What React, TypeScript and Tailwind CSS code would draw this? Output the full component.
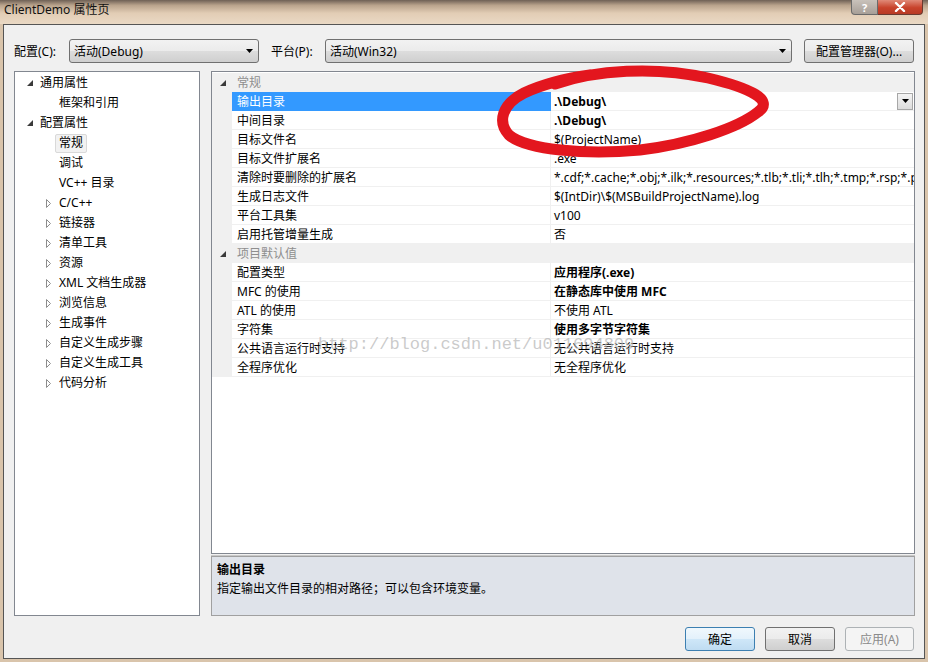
import React from 'react';

type TreeItem = { label: string; level: number; exp?: 'open' | 'closed'; selected?: boolean };

const tree: TreeItem[] = [
  { label: '通用属性', level: 0, exp: 'open' },
  { label: '框架和引用', level: 1 },
  { label: '配置属性', level: 0, exp: 'open' },
  { label: '常规', level: 1, selected: true },
  { label: '调试', level: 1 },
  { label: 'VC++ 目录', level: 1 },
  { label: 'C/C++', level: 1, exp: 'closed' },
  { label: '链接器', level: 1, exp: 'closed' },
  { label: '清单工具', level: 1, exp: 'closed' },
  { label: '资源', level: 1, exp: 'closed' },
  { label: 'XML 文档生成器', level: 1, exp: 'closed' },
  { label: '浏览信息', level: 1, exp: 'closed' },
  { label: '生成事件', level: 1, exp: 'closed' },
  { label: '自定义生成步骤', level: 1, exp: 'closed' },
  { label: '自定义生成工具', level: 1, exp: 'closed' },
  { label: '代码分析', level: 1, exp: 'closed' },
];

type Row = { cat?: string; name?: string; value?: string; bold?: boolean; selected?: boolean };

const rows: Row[] = [
  { cat: '常规' },
  { name: '输出目录', value: '.\\Debug\\', bold: true, selected: true },
  { name: '中间目录', value: '.\\Debug\\', bold: true },
  { name: '目标文件名', value: '$(ProjectName)' },
  { name: '目标文件扩展名', value: '.exe' },
  { name: '清除时要删除的扩展名', value: '*.cdf;*.cache;*.obj;*.ilk;*.resources;*.tlb;*.tli;*.tlh;*.tmp;*.rsp;*.pgc;*.pgd;*.meta;$(TargetPath)' },
  { name: '生成日志文件', value: '$(IntDir)\\$(MSBuildProjectName).log' },
  { name: '平台工具集', value: 'v100' },
  { name: '启用托管增量生成', value: '否' },
  { cat: '项目默认值' },
  { name: '配置类型', value: '应用程序(.exe)', bold: true },
  { name: 'MFC 的使用', value: '在静态库中使用 MFC', bold: true },
  { name: 'ATL 的使用', value: '不使用 ATL' },
  { name: '字符集', value: '使用多字节字符集', bold: true },
  { name: '公共语言运行时支持', value: '无公共语言运行时支持' },
  { name: '全程序优化', value: '无全程序优化' },
];

function OpenArrow() {
  return (
    <svg width="6" height="6" viewBox="0 0 6 6">
      <polygon points="6,0 6,6 0,6" fill="#3a3a3a" />
    </svg>
  );
}

function ClosedArrow() {
  return (
    <svg width="6" height="9" viewBox="0 0 6 9">
      <polygon points="0.5,0.5 4.5,4.5 0.5,8.5" fill="none" stroke="#8c8c8c" strokeWidth="1" />
    </svg>
  );
}

function DownTri() {
  return (
    <svg width="7" height="4" viewBox="0 0 7 4">
      <polygon points="0,0 7,0 3.5,4" fill="#000" />
    </svg>
  );
}

export default function App() {
  return (
    <div className="w-[928px] h-[662px] overflow-hidden relative flex flex-col bg-[#d9c4ab] text-[12px] text-black [font-family:'Noto_Sans','Noto_Sans_CJK_SC',sans-serif]">
      {/* Title bar */}
      <div className="h-[24px] flex items-start justify-between bg-[linear-gradient(to_bottom,#6e6055_0%,#b9a38c_22%,#e2cdb5_55%,#ead9c5_100%)]">
        <div className="pl-[4px] pt-[1px] text-[12px] leading-[18px] text-[#111]">ClientDemo 属性页</div>
        <div className="flex mr-[5px]">
          <div className="w-[27px] h-[15px] rounded-bl-[4px] border border-t-0 border-[#6a6a6a] bg-[linear-gradient(to_bottom,#c9c2bb,#a79f97)] flex items-center justify-center text-[11px] leading-none font-bold text-white">?</div>
          <div className="w-[45px] h-[15px] rounded-br-[4px] border border-t-0 border-l-0 border-[#6a3a30] bg-[linear-gradient(to_bottom,#e08a78,#c8432c_55%,#b83a24)] flex items-center justify-center">
            <svg width="12" height="10" viewBox="0 0 12 10">
              <path d="M2 1 L10 9 M10 1 L2 9" stroke="#fff" strokeWidth="2.4" strokeLinecap="round" />
            </svg>
          </div>
        </div>
      </div>

      {/* Client area */}
      <div className="mx-[3px] h-[635px] border border-[#555] bg-[#f0f0f0] flex flex-col">
        {/* toolbar row */}
        <div className="flex items-center pt-[14px] pl-[10px] h-[38px]">
          <div className="w-[55px] pt-[1px]">配置(C):</div>
          <div className="w-[190px] h-[24px] rounded-[3px] border border-[#707070] bg-[linear-gradient(to_bottom,#f2f2f2_0%,#ebebeb_50%,#dddddd_50%,#cfcfcf_100%)] flex items-center justify-between pl-[4px] pr-[5px]">
            <span className="pt-[1px]">活动(Debug)</span>
            <DownTri />
          </div>
          <div className="w-[54px] ml-[12px] pt-[1px]">平台(P):</div>
          <div className="w-[467px] h-[24px] rounded-[3px] border border-[#707070] bg-[linear-gradient(to_bottom,#f2f2f2_0%,#ebebeb_50%,#dddddd_50%,#cfcfcf_100%)] flex items-center justify-between pl-[4px] pr-[5px]">
            <span className="pt-[1px]">活动(Win32)</span>
            <DownTri />
          </div>
          <div className="w-[110px] ml-[12px] h-[24px] rounded-[3px] border border-[#707070] bg-[linear-gradient(to_bottom,#f2f2f2_0%,#ebebeb_50%,#dddddd_50%,#cfcfcf_100%)] flex items-center justify-center pt-[1px]">
            配置管理器(O)...
          </div>
        </div>

        {/* main */}
        <div className="flex mt-[8px] pl-[10px]">
          {/* tree */}
          <div className="w-[186px] h-[545px] border border-[#828790] bg-white pt-[1px]">
            {tree.map((t, i) => (
              <div key={i} className="h-[20px] flex items-center relative">
                <div className={t.level === 0 ? 'w-[25px] flex items-center justify-end pr-[7px]' : 'w-[44px] flex items-center justify-end pr-[7px]'}>
                  {t.exp === 'open' ? <OpenArrow /> : t.exp === 'closed' ? <ClosedArrow /> : null}
                </div>
                {t.selected ? (
                  <div className="-ml-[4px] h-[19px] px-[3px] border border-[#d9d9d9] rounded-[2px] bg-[#f2f2f2] flex items-center">{t.label}</div>
                ) : (
                  <div>{t.label}</div>
                )}
              </div>
            ))}
          </div>

          {/* right panel */}
          <div className="ml-[11px] w-[704px] h-[545px] flex flex-col">
            <div className="h-[483px] border border-[#828790] bg-white relative overflow-hidden pt-[1px]">
              {rows.map((r, i) =>
                r.cat ? (
                  <div key={i} className="h-[19px] flex items-center bg-[#f0f0f0] border-b border-[#f0f0f0] pt-[2px]">
                    <div className="w-[20px] flex justify-center pl-[2px]"><OpenArrow /></div>
                    <div className="pl-[5px] text-[#8e8e8e]">{r.cat}</div>
                  </div>
                ) : (
                  <div key={i} className="h-[19px] flex">
                    <div className="w-[20px] bg-[#f0f0f0]" />
                    <div className={r.selected ? 'w-[319px] pl-[5px] pt-[2px] flex items-center bg-[#3399ff] text-white border-b border-[#3399ff]' : 'w-[319px] pl-[5px] pt-[2px] flex items-center border-b border-r border-[#f0f0f0]'}>
                      {r.name}
                    </div>
                    <div className="flex-1 min-w-0 flex items-center pl-[3px] border-b border-[#f0f0f0] overflow-hidden">
                      <span className={r.bold ? 'font-bold whitespace-nowrap pt-[2px]' : 'whitespace-nowrap pt-[2px]'}>{r.value}</span>
                      {r.selected ? (
                        <div className="ml-auto mr-[1px] w-[16px] h-[17px] border border-[#a7a7a7] bg-[linear-gradient(to_bottom,#f4f4f4,#dcdcdc)] flex items-center justify-center shrink-0">
                          <DownTri />
                        </div>
                      ) : null}
                    </div>
                  </div>
                )
              )}
              <div className="absolute left-[106px] top-[263px] text-[17px] leading-[20px] text-[#b4b4b4]/70 [font-family:'Liberation_Mono',monospace] whitespace-nowrap">
                http://blog.csdn.net/u011694809
              </div>
            </div>
            <div className="h-[1px] mt-[1px] bg-[#c8c8c8]" />
            <div className="h-[60px] border border-[#a0a0a0] bg-[#dfe3ea] pl-[5px] pt-[3px]">
              <div className="font-bold leading-[19px]">输出目录</div>
              <div className="leading-[19px]">指定输出文件目录的相对路径；可以包含环境变量。</div>
            </div>
          </div>
        </div>

        {/* buttons */}
        <div className="flex justify-end gap-[10px] mt-[11px] pr-[10px]">
          <div className="w-[70px] h-[24px] rounded-[3px] border border-[#3c7fb1] bg-[linear-gradient(to_bottom,#f0f8fd_0%,#e3f1fb_50%,#cfe7f8_50%,#bfdcf2_100%)] flex items-center justify-center pt-[1px]">确定</div>
          <div className="w-[70px] h-[24px] rounded-[3px] border border-[#707070] bg-[linear-gradient(to_bottom,#f2f2f2_0%,#ebebeb_50%,#dddddd_50%,#cfcfcf_100%)] flex items-center justify-center pt-[1px]">取消</div>
          <div className="w-[69px] h-[24px] rounded-[3px] border border-[#adb2b5] bg-[#f4f4f4] text-[#8a8a8a] flex items-center justify-center pt-[1px]">应用(A)</div>
        </div>
      </div>

      {/* red hand-drawn circle */}
      <svg className="absolute left-0 top-0 pointer-events-none" width="928" height="662" viewBox="0 0 928 662">
        <path
          d="M555 84 C 595 70, 655 66, 708 78 C 750 88, 775 100, 758 112 C 738 128, 690 144, 640 150 C 585 155, 527 150, 509 135 C 497 122, 502 104, 524 93 C 543 84, 562 79, 590 75"
          fill="none"
          stroke="#e3161e"
          strokeWidth="11"
          strokeLinecap="round"
          strokeLinejoin="round"
        />
      </svg>
    </div>
  );
}
